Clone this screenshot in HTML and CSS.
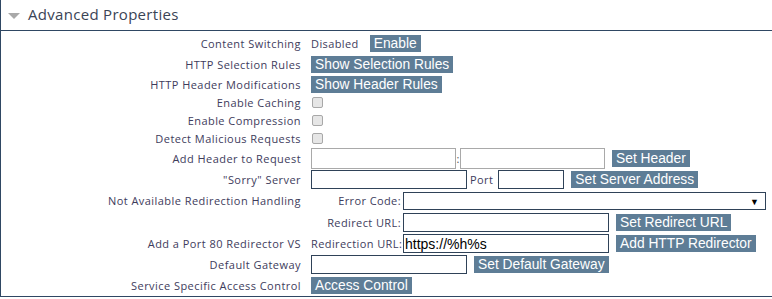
FILE: index.html
```html
<!DOCTYPE html>
<html lang="en">
<head>
    <meta charset="UTF-8">
    <title>Advanced Properties</title>
    <link rel="stylesheet" href="styles.css">
</head>
<body>
    <div class="panel">
        <div class="panel-header">
            <span class="caret"></span>
            <h2>Advanced Properties</h2>
        </div>

        <div class="props">
            <div class="row tall">
                <label>Content Switching</label>
                <div class="value">
                    <span class="state">Disabled</span>
                    <button class="btn">Enable</button>
                </div>
            </div>

            <div class="row">
                <label>HTTP Selection Rules</label>
                <div class="value"><button class="btn">Show Selection Rules</button></div>
            </div>

            <div class="row short">
                <label>HTTP Header Modifications</label>
                <div class="value"><button class="btn">Show Header Rules</button></div>
            </div>

            <div class="row short">
                <label>Enable Caching</label>
                <div class="value"><input type="checkbox" class="check"></div>
            </div>

            <div class="row short">
                <label>Enable Compression</label>
                <div class="value"><input type="checkbox" class="check"></div>
            </div>

            <div class="row short">
                <label>Detect Malicious Requests</label>
                <div class="value"><input type="checkbox" class="check"></div>
            </div>

            <div class="row tall">
                <label>Add Header to Request</label>
                <div class="value">
                    <input type="text" class="field soft w144">
                    <span class="colon">:</span>
                    <input type="text" class="field soft w144">
                    <button class="btn gap">Set Header</button>
                </div>
            </div>

            <div class="row">
                <label>"Sorry" Server</label>
                <div class="value">
                    <input type="text" class="field w156">
                    <span class="port">Port</span>
                    <input type="text" class="field w66">
                    <button class="btn gap">Set Server Address</button>
                </div>
            </div>

            <div class="row">
                <label>Not Available Redirection Handling</label>
                <div class="value">
                    <span class="sub">Error Code:</span>
                    <div class="select">
                        <span class="arrow">&#9660;</span>
                    </div>
                </div>
            </div>

            <div class="row tall">
                <label></label>
                <div class="value">
                    <span class="sub">Redirect URL:</span>
                    <input type="text" class="field w205">
                    <button class="btn gap">Set Redirect URL</button>
                </div>
            </div>

            <div class="row">
                <label>Add a Port 80 Redirector VS</label>
                <div class="value">
                    <span class="sub">Redirection URL:</span>
                    <input type="text" class="field w205" value="https://%h%s">
                    <button class="btn gap">Add HTTP Redirector</button>
                </div>
            </div>

            <div class="row">
                <label>Default Gateway</label>
                <div class="value">
                    <input type="text" class="field w156">
                    <button class="btn gap">Set Default Gateway</button>
                </div>
            </div>

            <div class="row">
                <label>Service Specific Access Control</label>
                <div class="value"><button class="btn">Access Control</button></div>
            </div>
        </div>
    </div>
</body>
</html>
```

FILE: styles.css
```css
* {
    margin: 0;
    padding: 0;
    box-sizing: border-box;
}

body {
    background: #ffffff;
    font-family: "Open Sans", "Noto Sans", sans-serif;
    font-size: 11px;
    color: #3e3c5c;
}

.panel {
    width: 772px;
    border-left: 1px solid #2f4763;
    border-bottom: 1px solid #2f4763;
}

.panel-header {
    display: flex;
    align-items: center;
    height: 31px;
    padding-left: 7px;
    border-bottom: 1px solid #2f4763;
}

.caret {
    width: 0;
    height: 0;
    border-left: 6px solid transparent;
    border-right: 6px solid transparent;
    border-top: 6px solid #a9a9a9;
    margin-right: 8px;
    margin-top: 1px;
}

.panel-header h2 {
    font-size: 15px;
    font-weight: 400;
    letter-spacing: 0.3px;
    color: #3a4455;
    margin-top: -2px;
}

.props {
    padding-top: 1px;
}

.row {
    display: flex;
    align-items: center;
    height: 21px;
}

.row.short {
    height: 18px;
}

.row.tall {
    height: 22px;
}

.row label {
    width: 300px;
    text-align: right;
    flex-shrink: 0;
    letter-spacing: 0.45px;
    white-space: nowrap;
}

.value {
    display: flex;
    align-items: center;
    padding-left: 10px;
}

.state {
    margin-right: 11px;
    letter-spacing: 0.4px;
}

.btn {
    height: 17px;
    padding: 0 4px;
    border: none;
    background: #5e7d96;
    color: #ffffff;
    font-family: "Liberation Sans", Arial, sans-serif;
    font-size: 13.8px;
    line-height: 17px;
}

.btn.gap {
    margin-left: 7px;
}

.check {
    appearance: none;
    width: 11px;
    height: 11px;
    margin-left: 1px;
    border: 1px solid #a8a8a8;
    border-radius: 2px;
    background: #e6e6e6;
}

.field {
    height: 19px;
    border: 1px solid #2f4258;
    padding: 0 1px;
    font-family: "Liberation Sans", Arial, sans-serif;
    font-size: 14px;
    color: #000000;
    background: #ffffff;
}

.field.soft {
    height: 21px;
    border: 1px solid #a9a9a9;
}

.w144 { width: 145px; }
.w156 { width: 156px; }
.w66 { width: 66px; }
.w205 { width: 206px; }

.colon {
    width: 4px;
    text-align: center;
    color: #555555;
}

.port {
    margin: 0 5px 0 3px;
    letter-spacing: 0.4px;
}

.sub {
    width: 90px;
    text-align: right;
    margin-right: 2px;
    letter-spacing: 0.4px;
    white-space: nowrap;
}

.select {
    position: relative;
    width: 363px;
    height: 18px;
    border: 1px solid #2f4258;
    background: #ffffff;
}

.select .arrow {
    position: absolute;
    right: 6px;
    top: 2px;
    font-size: 9px;
    color: #000000;
}
```
